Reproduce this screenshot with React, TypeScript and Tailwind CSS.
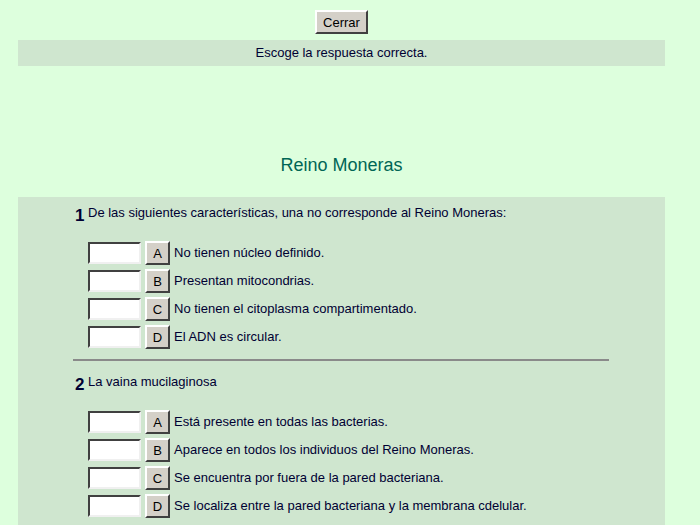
import React from 'react'

interface Question {
  num: number
  text: string
  options: string[]
}

const questions: Question[] = [
  {
    num: 1,
    text: 'De las siguientes características, una no corresponde al Reino Moneras:',
    options: [
      'No tienen núcleo definido.',
      'Presentan mitocondrias.',
      'No tienen el citoplasma compartimentado.',
      'El ADN es circular.',
    ],
  },
  {
    num: 2,
    text: 'La vaina mucilaginosa',
    options: [
      'Está presente en todas las bacterias.',
      'Aparece en todos los individuos del Reino Moneras.',
      'Se encuentra por fuera de la pared bacteriana.',
      'Se localiza entre la pared bacteriana y la membrana cdelular.',
    ],
  },
]

const letters = ['A', 'B', 'C', 'D']

const QuestionBlock: React.FC<{ q: Question }> = ({ q }) => (
  <div className="pl-[57px]">
    {/* number + question text, number sits a bit lower than the text */}
    <div className="flex items-end h-[26px]">
      <span className="w-[13px] text-[17px] leading-none font-bold text-[#000033]">{q.num}</span>
      <span className="text-[13px] leading-none pb-[5px] text-[#000033]">{q.text}</span>
    </div>
    <div className="mt-[17px] flex flex-col gap-[4px] pl-[13px]">
      {q.options.map((opt, i) => (
        <div key={i} className="flex items-center h-[24px]">
          <div className="w-[53px] h-[22px] bg-white border-2 border-t-[#404040] border-l-[#404040] border-b-[#f0f0f0] border-r-[#f0f0f0]" />
          <button className="ml-[4px] w-[25px] h-[24px] bg-[#d4d0c8] border-2 border-t-white border-l-white border-b-[#404040] border-r-[#404040] text-[13px] leading-none text-black">
            {letters[i]}
          </button>
          <span className="ml-[4px] text-[13px] text-[#000033]">{opt}</span>
        </div>
      ))}
    </div>
  </div>
)

export default function App() {
  return (
    <div
      className="w-[700px] h-[525px] overflow-hidden bg-[#ddffdd] text-[#000033]"
      style={{ fontFamily: '"Liberation Sans", Arial, sans-serif' }}
    >
      <div className="w-[683px]">
        <div className="pt-[10px] flex justify-center">
          <button className="w-[53px] h-[24px] bg-[#d4d0c8] border-2 border-t-white border-l-white border-b-[#404040] border-r-[#404040] text-[13px] text-black leading-none">
            Cerrar
          </button>
        </div>
        <div className="mx-[18px] mt-[6px] h-[26px] bg-[#cfe6cf] flex items-center justify-center text-[13px]">
          Escoge la respuesta correcta.
        </div>
        <h1 className="mt-[90px] text-center text-[18px] text-[#006655] leading-none h-[20px]">Reino Moneras</h1>
        <div className="mx-[18px] mt-[21px] bg-[#cfe6cf] pt-[1px] pb-[20px]">
          <QuestionBlock q={questions[0]} />
          <div className="ml-[55px] w-[536px] h-[2px] bg-[#8a8a8a] mt-[10px] mb-[6px]" />
          <QuestionBlock q={questions[1]} />
        </div>
      </div>
    </div>
  )
}
